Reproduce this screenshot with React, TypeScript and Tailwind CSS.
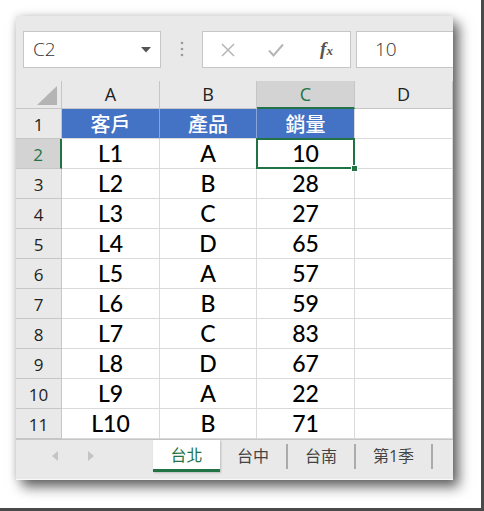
import React from 'react';

const rows: [string, string, string][] = [
  ['L1', 'A', '10'],
  ['L2', 'B', '28'],
  ['L3', 'C', '27'],
  ['L4', 'D', '65'],
  ['L5', 'A', '57'],
  ['L6', 'B', '59'],
  ['L7', 'C', '83'],
  ['L8', 'D', '67'],
  ['L9', 'A', '22'],
  ['L10', 'B', '71'],
];

const font = { fontFamily: '"Open Sans", "Noto Sans CJK TC", sans-serif' };
const cellFont = { fontFamily: 'Lato, "Noto Sans CJK TC", sans-serif' };

function ColHead({ label, active }: { label: string; active?: boolean }) {
  return (
    <div
      className={
        'flex items-center justify-center border-r border-[#c6c6c6] text-[18px] ' +
        (active
          ? 'bg-[#d3d3d3] text-[#217346] border-b-2 border-b-[#217346]'
          : 'bg-[#e9e9e9] text-[#222] border-b border-b-[#c6c6c6]')
      }
    >
      {label}
    </div>
  );
}

function RowHead({ n, active }: { n: number; active?: boolean }) {
  return (
    <div
      className={
        'flex items-end justify-center pb-[1px] border-b text-[17px] ' +
        (active
          ? 'bg-[#d3d3d3] text-[#217346] border-r-2 border-r-[#217346] border-b-[#c6c6c6]'
          : 'bg-[#e9e9e9] text-[#222] border-r border-r-[#c6c6c6] border-b-[#c6c6c6]')
      }
    >
      {n}
    </div>
  );
}

function Cell({ children, className = '' }: { children?: React.ReactNode; className?: string }) {
  return (
    <div
      className={
        'flex items-center justify-center border-r border-b border-[#dadada] text-[23px] font-medium text-black ' +
        className
      }
      style={cellFont}
    >
      {children}
    </div>
  );
}

export default function App() {
  return (
    <div className="w-[484px] h-[511px] bg-white border-r-[3px] border-b-[3px] border-[#4a4a4a] overflow-hidden" style={font}>
      <div className="ml-[16px] mt-[16px] w-[437px] h-[464px] flex flex-col bg-[#e9e9e9] shadow-[6px_7px_12px_rgba(0,0,0,0.6),0_0_8px_rgba(0,0,0,0.15)] overflow-hidden">
        {/* formula bar */}
        <div className="h-[65px] flex items-start pt-[15px] pl-[7px] shrink-0">
          <div className="w-[138px] h-[37px] bg-white border border-[#c6c6c6] flex items-center justify-between pl-[9px] pr-[9px]">
            <span className="text-[19px] text-[#333] font-light">C2</span>
            <svg width="10" height="6" viewBox="0 0 10 6">
              <path d="M0 0 L10 0 L5 5.5 Z" fill="#555" />
            </svg>
          </div>
          <div className="w-[41px] flex justify-center pt-[10px]">
            <svg width="4" height="16" viewBox="0 0 4 16">
              <circle cx="2" cy="2" r="1.3" fill="#9a9a9a" />
              <circle cx="2" cy="8" r="1.3" fill="#9a9a9a" />
              <circle cx="2" cy="14" r="1.3" fill="#9a9a9a" />
            </svg>
          </div>
          <div className="w-[149px] h-[37px] bg-white border border-[#c6c6c6] flex items-center">
            <div className="w-[50px] flex justify-center">
              <svg width="14" height="14" viewBox="0 0 14 14">
                <path d="M1 1 L13 13 M13 1 L1 13" stroke="#b5b5b5" strokeWidth="1.5" />
              </svg>
            </div>
            <div className="w-[46px] flex justify-center">
              <svg width="16" height="14" viewBox="0 0 16 14">
                <path d="M1 7.5 L5.5 12.5 L15 1.5" stroke="#b5b5b5" strokeWidth="2" fill="none" />
              </svg>
            </div>
            <div className="flex-1 flex justify-center pl-[4px]">
              <span className="text-[19px] italic font-bold text-[#555]" style={{ fontFamily: '"Liberation Serif", serif' }}>
                f<span className="text-[13px]">x</span>
              </span>
            </div>
          </div>
          <div className="ml-[5px] flex-1 h-[37px] bg-white border-y border-l border-[#c6c6c6] flex items-center pl-[18px]">
            <span className="text-[19px] text-[#333] font-light">10</span>
          </div>
        </div>

        {/* grid */}
        <div className="grid grid-cols-[46px_98px_97px_98px_98px] grid-rows-[28px_repeat(11,30px)] bg-white shrink-0">
          <div className="bg-[#e9e9e9] border-r border-b border-[#c6c6c6] flex items-end justify-end pr-[4px] pb-[3px]">
            <svg width="20" height="19" viewBox="0 0 20 19">
              <path d="M20 0 L20 19 L0 19 Z" fill="#b4b4b4" />
            </svg>
          </div>
          <ColHead label="A" />
          <ColHead label="B" />
          <ColHead label="C" active />
          <ColHead label="D" />

          <RowHead n={1} />
          <Cell className="bg-[#4472c4] !text-white !text-[20px] border-[#4472c4] border-r-[#8aa4d6]">客戶</Cell>
          <Cell className="bg-[#4472c4] !text-white !text-[20px] border-[#4472c4] border-r-[#8aa4d6]">產品</Cell>
          <Cell className="bg-[#4472c4] !text-white !text-[20px] border-[#4472c4]">銷量</Cell>
          <Cell />

          {rows.map((r, i) => (
            <React.Fragment key={i}>
              <RowHead n={i + 2} active={i === 0} />
              <Cell>{r[0]}</Cell>
              <Cell>{r[1]}</Cell>
              {i === 0 ? (
                <div
                  className="relative flex items-center justify-center border-2 border-[#217346] text-[23px] font-medium text-black -ml-[1px] -mt-[1px]"
                  style={cellFont}
                >
                  {r[2]}
                  <div className="absolute -right-[5px] -bottom-[5px] w-[7px] h-[7px] bg-[#217346] border border-white" />
                </div>
              ) : (
                <Cell>{r[2]}</Cell>
              )}
              <Cell />
            </React.Fragment>
          ))}
        </div>

        {/* sheet tabs */}
        <div className="flex-1 flex items-start bg-[#e9e9e9] border-t border-[#c6c6c6] border-b border-b-[#f8f8f8]">
          <div className="w-[137px] h-[32px] flex items-center gap-[30px] pl-[36px]">
            <svg width="6" height="10" viewBox="0 0 6 10">
              <path d="M6 0 L6 10 L0 5 Z" fill="#c4c4c4" />
            </svg>
            <svg width="6" height="10" viewBox="0 0 6 10">
              <path d="M0 0 L0 10 L6 5 Z" fill="#c4c4c4" />
            </svg>
          </div>
          <div className="w-[67px] h-[32px] bg-white border-b-[3px] border-[#217346] flex items-center justify-center text-[16px] text-[#217346] shadow-[1px_1px_2px_rgba(0,0,0,0.2)]">
            台北
          </div>
          <div className="w-[68px] h-[32px] flex items-center">
            <span className="flex-1 text-center text-[16px] text-[#444]">台中</span>
            <span className="w-[2px] h-[25px] bg-[#ababab]" />
          </div>
          <div className="w-[68px] h-[32px] flex items-center">
            <span className="flex-1 text-center text-[16px] text-[#444]">台南</span>
            <span className="w-[2px] h-[25px] bg-[#ababab]" />
          </div>
          <div className="w-[77px] h-[32px] flex items-center">
            <span className="flex-1 text-center text-[16px] text-[#444]">第1季</span>
            <span className="w-[2px] h-[25px] bg-[#ababab]" />
          </div>
        </div>
      </div>
    </div>
  );
}
